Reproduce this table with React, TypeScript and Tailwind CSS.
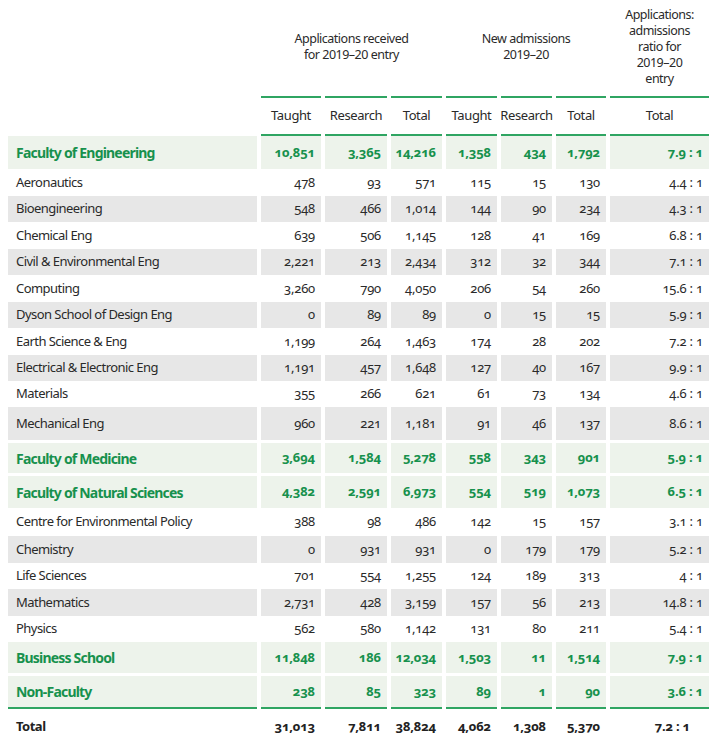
import React from "react";

const GRID = "grid grid-cols-[249px_60px_62px_51px_51px_51px_50px_99px] gap-x-1";
const FONT = "font-['Noto_Sans',sans-serif]";

type Row = {
  name: string;
  v: string[];
  kind: "fac" | "gray" | "white";
  h: string;
  gap?: boolean;
  last?: boolean;
};

const rows: Row[] = [
  { name: "Faculty of Engineering", v: ["10,851", "3,365", "14,216", "1,358", "434", "1,792", "7.9 : 1"], kind: "fac", h: "h-[33px]" },
  { name: "Aeronautics", v: ["478", "93", "571", "115", "15", "130", "4.4 : 1"], kind: "white", h: "h-[27px]" },
  { name: "Bioengineering", v: ["548", "466", "1,014", "144", "90", "234", "4.3 : 1"], kind: "gray", h: "h-[26px]" },
  { name: "Chemical Eng", v: ["639", "506", "1,145", "128", "41", "169", "6.8 : 1"], kind: "white", h: "h-[27px]" },
  { name: "Civil & Environmental Eng", v: ["2,221", "213", "2,434", "312", "32", "344", "7.1 : 1"], kind: "gray", h: "h-[26px]" },
  { name: "Computing", v: ["3,260", "790", "4,050", "206", "54", "260", "15.6 : 1"], kind: "white", h: "h-[27px]" },
  { name: "Dyson School of Design Eng", v: ["0", "89", "89", "0", "15", "15", "5.9 : 1"], kind: "gray", h: "h-[26px]" },
  { name: "Earth Science & Eng", v: ["1,199", "264", "1,463", "174", "28", "202", "7.2 : 1"], kind: "white", h: "h-[27px]" },
  { name: "Electrical & Electronic Eng", v: ["1,191", "457", "1,648", "127", "40", "167", "9.9 : 1"], kind: "gray", h: "h-[26px]" },
  { name: "Materials", v: ["355", "266", "621", "61", "73", "134", "4.6 : 1"], kind: "white", h: "h-[26px]" },
  { name: "Mechanical Eng", v: ["960", "221", "1,181", "91", "46", "137", "8.6 : 1"], kind: "gray", h: "h-[33px]" },
  { name: "Faculty of Medicine", v: ["3,694", "1,584", "5,278", "558", "343", "901", "5.9 : 1"], kind: "fac", h: "h-[30px]", gap: true },
  { name: "Faculty of Natural Sciences", v: ["4,382", "2,591", "6,973", "554", "519", "1,073", "6.5 : 1"], kind: "fac", h: "h-[32px]", gap: true },
  { name: "Centre for Environmental Policy", v: ["388", "98", "486", "142", "15", "157", "3.1 : 1"], kind: "white", h: "h-[28px]" },
  { name: "Chemistry", v: ["0", "931", "931", "0", "179", "179", "5.2 : 1"], kind: "gray", h: "h-[27px]" },
  { name: "Life Sciences", v: ["701", "554", "1,255", "124", "189", "313", "4 : 1"], kind: "white", h: "h-[26px]" },
  { name: "Mathematics", v: ["2,731", "428", "3,159", "157", "56", "213", "14.8 : 1"], kind: "gray", h: "h-[27px]" },
  { name: "Physics", v: ["562", "580", "1,142", "131", "80", "211", "5.4 : 1"], kind: "white", h: "h-[26px]" },
  { name: "Business School", v: ["11,848", "186", "12,034", "1,503", "11", "1,514", "7.9 : 1"], kind: "fac", h: "h-[31px]" },
  { name: "Non-Faculty", v: ["238", "85", "323", "89", "1", "90", "3.6 : 1"], kind: "fac", h: "h-[33px]", gap: true, last: true },
];

const total = ["31,013", "7,811", "38,824", "4,062", "1,308", "5,370", "7.2 : 1"];

function bgFor(kind: Row["kind"]) {
  if (kind === "fac") return "bg-[#edf3eb]";
  if (kind === "gray") return "bg-[#e7e7e7]";
  return "bg-white";
}

function DataRow({ row }: { row: Row }) {
  const bg = bgFor(row.kind);
  const fac = row.kind === "fac";
  const line = row.last ? "border-b-2 border-[#2fa562]" : "";
  return (
    <div className={`${GRID} ${row.h} ${row.gap ? "mt-[3px]" : ""}`}>
      <div
        className={`${bg} ${line} flex items-center pl-2 ${
          fac
            ? "text-[14px] font-bold tracking-[-0.8px] text-[#17914d]"
            : "text-[13px] tracking-[-0.55px] text-[#2a2a2a]"
        }`}
      >
        {row.name}
      </div>
      {row.v.map((val, i) => (
        <div
          key={i}
          className={`${bg} ${line} flex items-center justify-end pr-[6px] oldstyle-nums tracking-[-0.2px] whitespace-pre ${
            fac ? "text-[13px] font-bold text-[#17914d]" : "text-[13px] text-[#2a2a2a]"
          }`}
        >
          {val}
        </div>
      ))}
    </div>
  );
}

export default function App() {
  return (
    <div className={`w-[724px] h-[746px] overflow-hidden bg-white pl-2 ${FONT} text-[#2a2a2a]`}>
      {/* group headings */}
      <div className={`${GRID} h-[96px] items-center pb-[3px] text-[12.5px] leading-[16px] tracking-[-0.5px] text-center`}>
        <div />
        <div className="col-span-3">
          Applications received
          <br />
          for 2019–20 entry
        </div>
        <div className="col-span-3">
          New admissions
          <br />
          2019–20
        </div>
        <div>
          Applications:
          <br />
          admissions
          <br />
          ratio for
          <br />
          2019–20
          <br />
          entry
        </div>
      </div>

      {/* column headings */}
      <div className={`${GRID} h-[40px] text-[13px] tracking-[-0.4px]`}>
        <div />
        {["Taught", "Research", "Total", "Taught", "Research", "Total", "Total"].map((t, i) => (
          <div
            key={i}
            className="flex items-center justify-center border-y-2 border-[#2fa562]"
          >
            {t}
          </div>
        ))}
      </div>

      {rows.map((r) => (
        <DataRow key={r.name} row={r} />
      ))}

      {/* total */}
      <div className={`${GRID} h-[36px] text-[13px] font-bold text-[#222]`}>
        <div className="flex items-center pl-2 tracking-[-0.5px]">Total</div>
        {total.map((val, i) => (
          <div
            key={i}
            className={`flex items-center justify-end oldstyle-nums tracking-[-0.2px] ${i === 6 ? "pr-[19px]" : "pr-[6px]"}`}
          >
            {val}
          </div>
        ))}
      </div>
    </div>
  );
}
